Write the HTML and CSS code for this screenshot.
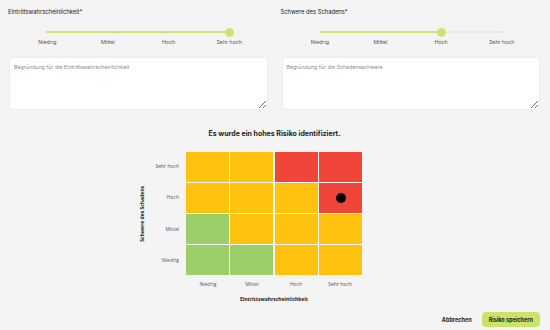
FILE: index.html
```html
<!DOCTYPE html>
<html lang="de">
<head>
<meta charset="utf-8">
<link rel="stylesheet" href="styles.css">
</head>
<body>
<div class="page">
  <div class="fields">
    <div class="field">
      <div class="label">Eintrittswahrscheinlichkeit*</div>
      <div class="slider">
        <div class="track-row">
          <div class="track">
            <div class="fill" style="width:100%"></div>
            <span class="tick" style="left:0%"></span>
            <span class="tick" style="left:33.333%"></span>
            <span class="tick" style="left:66.667%"></span>
            <span class="tick" style="left:100%"></span>
            <span class="knob" style="left:100%"></span>
          </div>
        </div>
        <div class="ticks">
          <span>Niedrig</span><span>Mittel</span><span>Hoch</span><span>Sehr hoch</span>
        </div>
      </div>
      <textarea class="reason" placeholder="Begründung für die Eintrittswahrscheinlichkeit"></textarea>
    </div>
    <div class="field">
      <div class="label">Schwere des Schadens*</div>
      <div class="slider">
        <div class="track-row">
          <div class="track">
            <div class="fill" style="width:66.667%"></div>
            <span class="tick" style="left:0%"></span>
            <span class="tick" style="left:33.333%"></span>
            <span class="tick" style="left:66.667%"></span>
            <span class="tick" style="left:100%"></span>
            <span class="knob" style="left:66.667%"></span>
          </div>
        </div>
        <div class="ticks">
          <span>Niedrig</span><span>Mittel</span><span>Hoch</span><span>Sehr hoch</span>
        </div>
      </div>
      <textarea class="reason" placeholder="Begründung für die Schadensschwere"></textarea>
    </div>
  </div>

  <h2 class="result">Es wurde ein hohes Risiko identifiziert.</h2>

  <div class="chart">
    <div class="y-side">
      <div class="y-title">Schwere des Schadens</div>
      <div class="row-labels">
        <span>Sehr hoch</span><span>Hoch</span><span>Mittel</span><span>Niedrig</span>
      </div>
    </div>
    <div class="matrix">
      <div class="cell amber"></div><div class="cell amber"></div><div class="cell red"></div><div class="cell red"></div>
      <div class="cell amber"></div><div class="cell amber"></div><div class="cell amber"></div><div class="cell red"><span class="marker"></span></div>
      <div class="cell green"></div><div class="cell amber"></div><div class="cell amber"></div><div class="cell amber"></div>
      <div class="cell green"></div><div class="cell green"></div><div class="cell amber"></div><div class="cell amber"></div>
    </div>
    <div class="x-labels">
      <span>Niedrig</span><span>Mittel</span><span>Hoch</span><span>Sehr hoch</span>
    </div>
    <div class="x-title">Eintrittswahrscheinlichkeit</div>
  </div>

  <div class="footer">
    <button class="btn btn-text">Abbrechen</button>
    <button class="btn btn-primary">Risiko speichern</button>
  </div>
</div>
</body>
</html>
```

FILE: styles.css
```css
* { box-sizing: border-box; }
html, body {
  margin: 0;
  background: #f4f4f4;
  width: 550px;
  height: 330px;
  overflow: hidden;
}
body {
  font-family: Inter, "Noto Sans", sans-serif;
  color: #222;
}
.page {
  padding: 8px 10px 0 9px;
}
.fields {
  display: grid;
  grid-template-columns: 1fr 1fr;
  column-gap: 14px;
}
.field {
  display: flex;
  flex-direction: column;
}
.label {
  font-size: 5.8px;
  line-height: 8px;
  margin-left: -1px;
  color: #222;
}
.slider {
  margin: 12px 8px 0;
}
.track-row {
  height: 8px;
  display: flex;
  align-items: center;
  padding: 0 12.5%;
}
.track {
  position: relative;
  flex: 1;
  height: 2px;
  background: #ebebeb;
  border-radius: 1px;
}
.fill {
  height: 100%;
  background: #cfe46e;
  border-radius: 1px;
}
.tick {
  position: absolute;
  top: 0;
  width: 2px;
  height: 2px;
  margin-left: -1px;
  border-radius: 50%;
  background: #cfe46e;
}
.knob {
  position: absolute;
  top: 50%;
  width: 9px;
  height: 9px;
  margin: -4.5px 0 0 -4.5px;
  border-radius: 50%;
  background: #cfe46e;
}
.ticks {
  display: grid;
  grid-template-columns: repeat(4, 1fr);
  margin-top: 2.5px;
  font-size: 5.3px;
  line-height: 7px;
  color: #555;
  text-align: center;
}
.reason {
  margin-top: 11.5px;
  height: 53px;
  width: 100%;
  display: block;
  border: 1px solid #ededed;
  border-radius: 3px;
  background: #fff;
  padding: 6px 4px;
  font-family: Inter, "Noto Sans", sans-serif;
  font-size: 5.3px;
  line-height: 7px;
  color: #333;
  outline: none;
}
.reason::placeholder { color: #8c8c8c; }

.result {
  margin: 19px 0 0;
  text-align: center;
  font-size: 7px;
  line-height: 10px;
  font-weight: 700;
  color: #222;
}

.chart {
  margin-top: 13px;
  display: grid;
  grid-template-columns: 1fr 176px 1fr;
  font-family: "Open Sans", "Noto Sans", sans-serif;
  margin-left: -1px;
}
.y-side {
  grid-column: 1;
  grid-row: 1;
  display: flex;
  justify-content: flex-end;
  align-items: center;
  gap: 10px;
  padding-right: 7px;
}
.y-title {
  writing-mode: vertical-rl;
  transform: rotate(180deg);
  font-size: 5px;
  line-height: 7px;
  font-weight: 700;
  color: #222;
}
.row-labels {
  display: grid;
  grid-template-rows: repeat(4, 1fr);
  row-gap: 1.5px;
  height: 123px;
  align-items: center;
  justify-items: end;
  font-size: 5px;
  line-height: 7px;
  color: #555;
}
.matrix {
  grid-column: 2;
  grid-row: 1;
  display: grid;
  grid-template-columns: repeat(4, 1fr);
  grid-template-rows: repeat(4, 1fr);
  gap: 1.5px;
  height: 123px;
}
.cell {
  display: flex;
  align-items: center;
  justify-content: center;
}
.amber { background: #ffc20e; }
.red { background: #f0463a; }
.green { background: #9ccf69; }
.marker {
  width: 10px;
  height: 10px;
  border-radius: 50%;
  background: #000;
}
.x-labels {
  grid-column: 2;
  grid-row: 2;
  display: grid;
  grid-template-columns: repeat(4, 1fr);
  margin-top: 5.5px;
  text-align: center;
  font-size: 5px;
  line-height: 7px;
  color: #555;
}
.x-title {
  grid-column: 2;
  grid-row: 3;
  margin-top: 7.5px;
  text-align: center;
  font-size: 5px;
  line-height: 8px;
  font-weight: 700;
  color: #222;
}

.footer {
  margin-top: 9px;
  display: flex;
  justify-content: flex-end;
  align-items: center;
  gap: 1px;
}
.btn {
  font-family: Inter, "Noto Sans", sans-serif;
  font-size: 5.5px;
  font-weight: 700;
  height: 15px;
  border: none;
  border-radius: 4px;
  padding: 0 8px;
  color: #222;
  cursor: pointer;
}
.btn-text { background: transparent; padding: 0 9px; }
.btn-primary { background: #cbe36a; padding: 0 7px; }
```
